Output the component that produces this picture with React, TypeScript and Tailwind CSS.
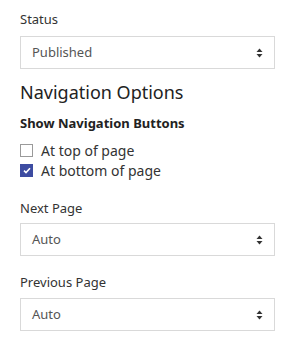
import type { ReactNode } from 'react';

function Arrows() {
  return (
    <svg width="7" height="10" viewBox="0 0 7 10" className="shrink-0">
      <path d="M3.5 0.5 L6.5 4 L0.5 4 Z" fill="#333" />
      <path d="M0.5 6 L6.5 6 L3.5 9.5 Z" fill="#333" />
    </svg>
  );
}

function Select({ value }: { value: string }) {
  return (
    <div className="flex h-[33px] items-center justify-between border border-[#d9d9d9] bg-white pl-[11px] pr-[11px] text-[13px] text-[#555]">
      <span>{value}</span>
      <Arrows />
    </div>
  );
}

function Label({ children, className = '' }: { children: ReactNode; className?: string }) {
  return <div className={`text-[13px] leading-[18px] text-[#333] ${className}`}>{children}</div>;
}

function Check({ checked, label }: { checked?: boolean; label: string }) {
  return (
    <div className="flex h-[20px] items-center gap-[8px] text-[14px] text-[#333]">
      {checked ? (
        <span className="flex h-[13px] w-[13px] items-center justify-center bg-[#3d4ca1]">
          <svg width="8" height="7" viewBox="0 0 8 7">
            <path d="M1 3.6 L3 5.5 L7 1.2" stroke="#fff" strokeWidth="1.6" fill="none" />
          </svg>
        </span>
      ) : (
        <span className="h-[13px] w-[13px] border border-[#9a9a9a] bg-white" />
      )}
      <span>{label}</span>
    </div>
  );
}

export default function App() {
  return (
    <div
      className="min-h-[357px] w-[295px] bg-white px-[20px] pt-[10px]"
      style={{ fontFamily: '"Noto Sans", "Open Sans", sans-serif' }}
    >
      <Label className="mb-[8px]">Status</Label>
      <Select value="Published" />

      <h2 className="mt-[11px] text-[18px] leading-[24px] font-normal text-[#222]">Navigation Options</h2>
      <h3 className="mt-[10px] text-[13px] leading-[18px] font-bold text-[#222]">Show Navigation Buttons</h3>

      <div className="mt-[8px] flex flex-col">
        <Check label="At top of page" />
        <Check checked label="At bottom of page" />
      </div>

      <Label className="mt-[19px] mb-[6px]">Next Page</Label>
      <Select value="Auto" />

      <Label className="mt-[17px] mb-[7px]">Previous Page</Label>
      <Select value="Auto" />
    </div>
  );
}
